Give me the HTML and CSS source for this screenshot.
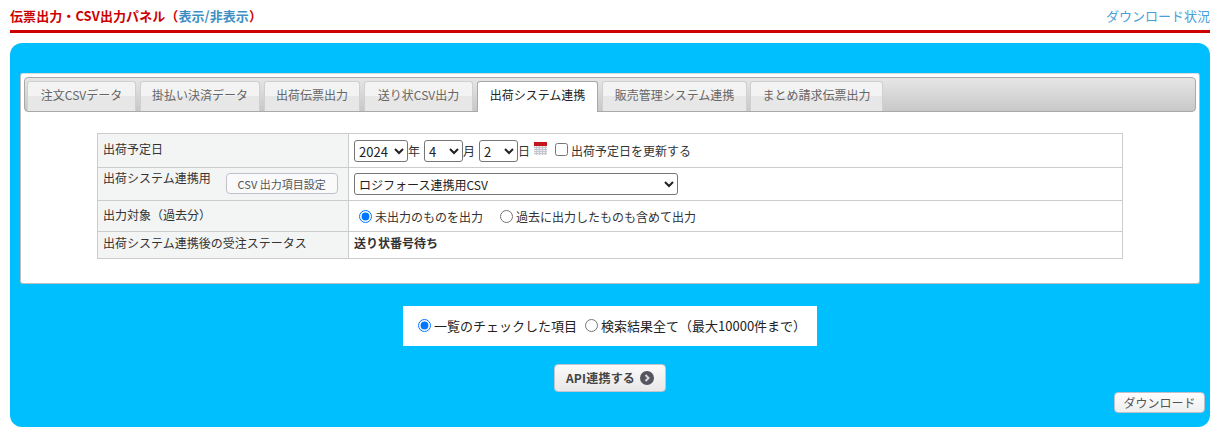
FILE: index.html
```html
<!DOCTYPE html>
<html lang="ja">
<head>
<meta charset="utf-8">
<title>伝票出力・CSV出力パネル</title>
<link rel="stylesheet" href="styles.css">
</head>
<body>
<header class="head">
  <h2 class="head-title">伝票出力・CSV出力パネル（<a class="toggle" href="#">表示/非表示</a>）</h2>
  <a class="status-link" href="#">ダウンロード状況</a>
</header>
<main class="panel">
  <section class="card">
    <ul class="tabs">
      <li class="tab tab-1">注文CSVデータ</li>
      <li class="tab tab-2">掛払い決済データ</li>
      <li class="tab tab-3">出荷伝票出力</li>
      <li class="tab tab-4">送り状CSV出力</li>
      <li class="tab tab-5 active">出荷システム連携</li>
      <li class="tab tab-6">販売管理システム連携</li>
      <li class="tab tab-7">まとめ請求伝票出力</li>
    </ul>
    <table class="form">
      <tr class="row-1">
        <th>出荷予定日</th>
        <td>
          <div class="line">
            <select class="sel sel-year"><option>2024</option></select><span>年</span>
            <select class="sel sel-md"><option>4</option></select><span>月</span>
            <select class="sel sel-md"><option>2</option></select><span>日</span>
            <svg class="cal" width="13" height="13" viewBox="0 0 13 13" aria-hidden="true">
              <rect x="0" y="0" width="13" height="13" fill="#eeeef0"/>
              <rect x="0" y="0" width="13" height="4" fill="#c4161c"/>
              <path d="M0 5.500H13M0 7.500H13M0 9.500H13M0 11.500H13M2.500 4V13M5.500 4V13M8.500 4V13M11.500 4V13" stroke="#c4c8ce" stroke-width="1" fill="none"/>
            </svg>
            <label class="check"><input type="checkbox">出荷予定日を更新する</label>
          </div>
        </td>
      </tr>
      <tr class="row-2">
        <th><div class="th-flex"><span>出荷システム連携用</span><button class="btn-small" type="button">CSV 出力項目設定</button></div></th>
        <td><select class="sel sel-wide"><option>ロジフォース連携用CSV</option></select></td>
      </tr>
      <tr class="row-3">
        <th>出力対象（過去分）</th>
        <td>
          <div class="line radios">
            <label class="radio"><input type="radio" name="past" checked>未出力のものを出力</label>
            <label class="radio"><input type="radio" name="past">過去に出力したものも含めて出力</label>
          </div>
        </td>
      </tr>
      <tr class="row-4">
        <th>出荷システム連携後の受注ステータス</th>
        <td><strong>送り状番号待ち</strong></td>
      </tr>
    </table>
  </section>
  <div class="scope">
    <label class="radio"><input type="radio" name="scope" checked>一覧のチェックした項目</label>
    <label class="radio"><input type="radio" name="scope">検索結果全て（最大10000件まで）</label>
  </div>
  <div class="actions">
    <button class="btn-api" type="button">API連携する
      <svg class="arrow" width="14" height="14" viewBox="0 0 14 14" aria-hidden="true">
        <circle cx="7" cy="7" r="7" fill="#55555f"/>
        <path d="M5.500 4L8.500 7L5.500 10" stroke="#d8d8d8" stroke-width="2" fill="none"/>
      </svg>
    </button>
  </div>
  <button class="btn-download" type="button">ダウンロード</button>
</main>
</body>
</html>
```
FILE: styles.css
```css
* { box-sizing: border-box; }
html, body { height: 100%; }
body {
  margin: 0;
  padding: 0 2px 0 10px;
  background: #fff;
  color: #333;
  font: 12px/18px "Noto Sans CJK JP", "Noto Sans", sans-serif;
  overflow: hidden;
}
.head {
  width: 1200px;
  height: 33px;
  display: flex;
  justify-content: space-between;
  align-items: flex-start;
  padding-top: 7px;
  border-bottom: 3px solid #cc0000;
  font-size: 13px;
}
.head-title { margin: 0; font-size: 13px; font-weight: 700; color: #cc0000; letter-spacing: .08px; }
.toggle { color: #3f8fc4; text-decoration: none; }
.status-link { color: #4a9fd8; text-decoration: none; }
.panel {
  position: relative;
  width: 1200px;
  height: 384px;
  margin-top: 10px;
  padding: 30px 10px 0;
  background: #00bfff;
  border-radius: 12px;
}
.card {
  height: 211px;
  padding: 3px;
  background: #fff;
  border: 1px solid #bdbdbd;
  border-top-color: #ddd;
  border-radius: 3px;
}
.tabs {
  display: flex;
  height: 35px;
  margin: 0;
  padding: 3px 0 0 2px;
  list-style: none;
  background: linear-gradient(#e6e6e6, #c8c8c8);
  border: 1px solid #a9a9a9;
  border-radius: 4px;
}
.tab {
  height: 30px;
  margin-right: 4px;
  text-align: center;
  line-height: 25px;
  color: #666;
  background: linear-gradient(#f3f3f3 50%, #e7e7e7 50%);
  border: 1px solid #d0d0d0;
  border-bottom: 0;
  border-radius: 3px 3px 0 0;
}
.tab.active {
  height: 31px;
  color: #222;
  background: #fff;
  border-color: #a9a9a9;
}
.tab-1 { width: 109px; }
.tab-2 { width: 120px; }
.tab-3 { width: 96px; }
.tab-4 { width: 109px; }
.tab-5 { width: 121px; }
.tab-6 { width: 145px; margin-right: 3px; }
.tab-7 { width: 133px; }
.form {
  width: 1026px;
  margin: 21px 0 0 73px;
  border-collapse: collapse;
  table-layout: fixed;
}
.form th, .form td {
  border: 1px solid #ccc;
  padding: 0 5px;
  text-align: left;
  vertical-align: middle;
  font-weight: 400;
}
.form th { width: 251px; background: #f3f5f4; vertical-align: top; padding-top: 6px; color: #333; }
.row-1 { height: 34px; }
.row-2 { height: 33px; }
.row-3 { height: 31px; }
.row-4 { height: 27px; }
.form .row-3 th { padding-top: 5px; }
.form .row-4 th { padding-top: 2px; }
.form .row-2 th { padding-top: 1px; }
.form .row-4 td { padding-bottom: 4px; }
.form td strong { font-weight: 700; }
.th-flex { display: flex; align-items: flex-start; gap: 15px; }
.btn-small {
  width: 112px;
  height: 21px;
  margin-top: 4px;
  padding: 0;
  font: 11px/18px "Noto Sans CJK JP", sans-serif;
  color: #555;
  background: #fafafa;
  border: 1px solid #c0c0cc;
  border-radius: 4px;
}
.line { display: flex; align-items: center; }
.sel {
  height: 22px;
  font: 13px "Noto Sans CJK JP", sans-serif;
  color: #222;
  background: #fff;
  border: 1px solid #767676;
  border-radius: 3px;
}
.sel-year { width: 54px; }
.sel-md { width: 39px; margin-left: 4px; }
.sel-wide { width: 324px; display: block; font-size: 12px; }
.cal { margin: 0 0 4px 4px; }
.check { display: flex; align-items: center; margin-left: 8px; }
.check input { width: 13px; height: 13px; margin: 0 3px 2px 0; }
.radio { display: inline-flex; align-items: center; }
.radio input { width: 13px; height: 13px; margin: 0 3px 2px 0; }
.radios { padding: 2px 0 0 5px; gap: 17px; }
.scope {
  display: flex;
  align-items: center;
  gap: 8px;
  width: 414px;
  height: 40px;
  margin: 22px auto 0;
  padding-left: 15px;
  background: #fff;
  color: #222;
  font-size: 13px;
}
.actions { display: flex; justify-content: center; margin-top: 18px; }
.btn-api {
  display: flex;
  align-items: center;
  justify-content: center;
  gap: 5px;
  width: 112px;
  height: 28px;
  padding: 0 0 2px;
  font: 700 12px "Noto Sans CJK JP", sans-serif;
  letter-spacing: .2px;
  color: #444;
  background: linear-gradient(#fafafa, #e8e8e8);
  border: 1px solid #c4c4cc;
  border-radius: 4px;
}
.btn-api .arrow { margin-top: 2px; }
.btn-download {
  position: absolute;
  right: 5px;
  bottom: 14px;
  width: 91px;
  height: 21px;
  padding: 0 0 1px;
  font: 12px "Noto Sans CJK JP", sans-serif;
  color: #555;
  background: linear-gradient(#fdfdfd, #efefef);
  border: 1px solid #c0c0cc;
  border-radius: 4px;
}
```
